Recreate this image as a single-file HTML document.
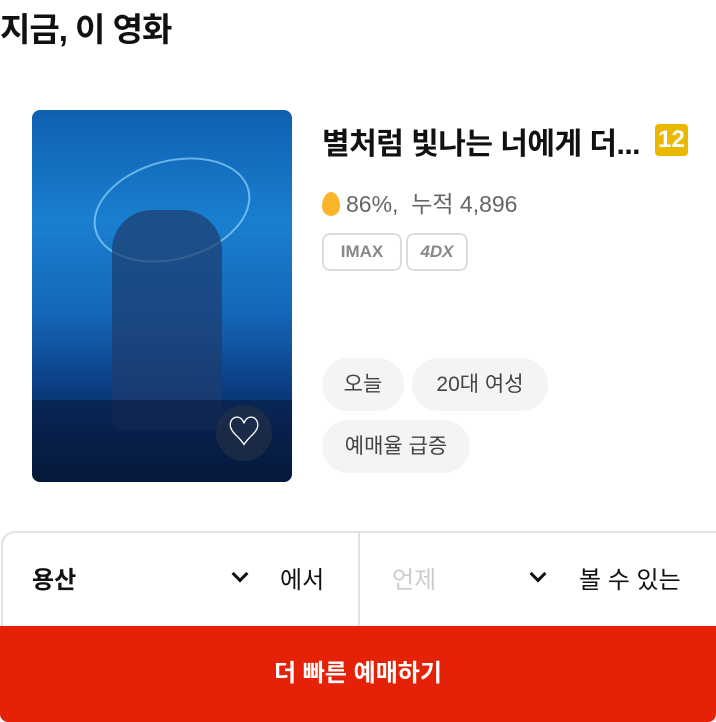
<!DOCTYPE html>
<html><head><meta charset="utf-8"><style>
*{margin:0;padding:0;box-sizing:border-box}
html,body{width:716px;height:722px;overflow:hidden}
body{background:#fff;font-family:"Liberation Sans","Noto Sans CJK KR",sans-serif;position:relative;color:#111}
.abs{position:absolute}
h1{position:absolute;left:0;top:3px;font-size:33px;font-weight:700;letter-spacing:-1px}
.poster{left:32px;top:110px;width:260px;height:372px;border-radius:8px;overflow:hidden;background:linear-gradient(180deg,#0f5fb0 0%,#1a7fd0 30%,#1466b8 55%,#0b3c80 75%,#061d45 100%)}
.title{left:322px;top:119px;font-size:30px;font-weight:700;letter-spacing:-0.5px}
.age{left:655px;top:124px;width:33px;height:32px;background:#e9b800;border-radius:4px;color:#fff;font-weight:700;font-size:24px;text-align:center;line-height:32px}
.stat{left:322px;top:185px;font-size:23px;color:#666}
.egg{display:inline-block;width:18px;height:24px;background:#fbb52a;border-radius:50% 50% 50% 50%/60% 60% 40% 40%;vertical-align:-4px;margin-right:6px}
.badge{top:233px;height:38px;border:2px solid #ddd;border-radius:8px;color:#888;font-weight:900;font-size:17px;text-align:center;line-height:34px}
.tag{height:53px;background:#f4f4f4;border-radius:27px;font-size:21px;color:#444;text-align:center;line-height:53px}
.box{left:1px;top:531px;width:740px;height:190px;border:2px solid #e2e2e2;border-radius:14px}
.btn{left:0;top:626px;width:716px;height:96px;background:#e52207;color:#fff;font-size:24px;font-weight:700;text-align:center;line-height:96px;border-radius:0 0 8px 8px}
.chev{width:12px;height:12px;border-right:3px solid #111;border-bottom:3px solid #111;transform:rotate(45deg)}
</style></head><body>
<h1>지금, 이 영화</h1>
<div class="abs poster">
<div class="abs" style="left:60px;top:50px;width:160px;height:100px;border:2px solid rgba(160,230,255,.6);border-radius:50%;transform:rotate(-15deg)"></div>
<div class="abs" style="left:80px;top:100px;width:110px;height:220px;background:rgba(30,60,110,.7);border-radius:40px 40px 10px 10px"></div>
<div class="abs" style="left:0;top:290px;width:260px;height:82px;background:rgba(5,20,50,.5)"></div>
<div class="abs" style="left:184px;top:295px;width:56px;height:56px;border-radius:50%;background:rgba(40,50,70,.6);color:#fff;font-size:34px;text-align:center;line-height:56px">♡</div>
</div>
<div class="abs title">별처럼 빛나는 너에게 더...</div>
<div class="abs age">12</div>
<div class="abs stat"><span class="egg"></span>86%,&nbsp; 누적 4,896</div>
<div class="abs badge" style="left:322px;width:80px">IMAX</div>
<div class="abs badge" style="left:406px;width:62px;font-style:italic">4DX</div>
<div class="abs tag" style="left:322px;top:358px;width:82px">오늘</div>
<div class="abs tag" style="left:412px;top:358px;width:136px">20대 여성</div>
<div class="abs tag" style="left:322px;top:420px;width:148px">예매율 급증</div>
<div class="abs box"></div>
<div class="abs" style="left:358px;top:533px;width:2px;height:93px;background:#e2e2e2"></div>
<div class="abs" style="left:32px;top:560px;font-size:24px;font-weight:700">용산</div>
<div class="abs chev" style="left:234px;top:568px"></div>
<div class="abs" style="left:280px;top:560px;font-size:24px">에서</div>
<div class="abs" style="left:392px;top:560px;font-size:24px;color:#ccc">언제</div>
<div class="abs chev" style="left:532px;top:568px"></div>
<div class="abs" style="left:579px;top:560px;font-size:24px">볼 수 있는</div>
<div class="abs btn">더 빠른 예매하기</div>
</body></html>
